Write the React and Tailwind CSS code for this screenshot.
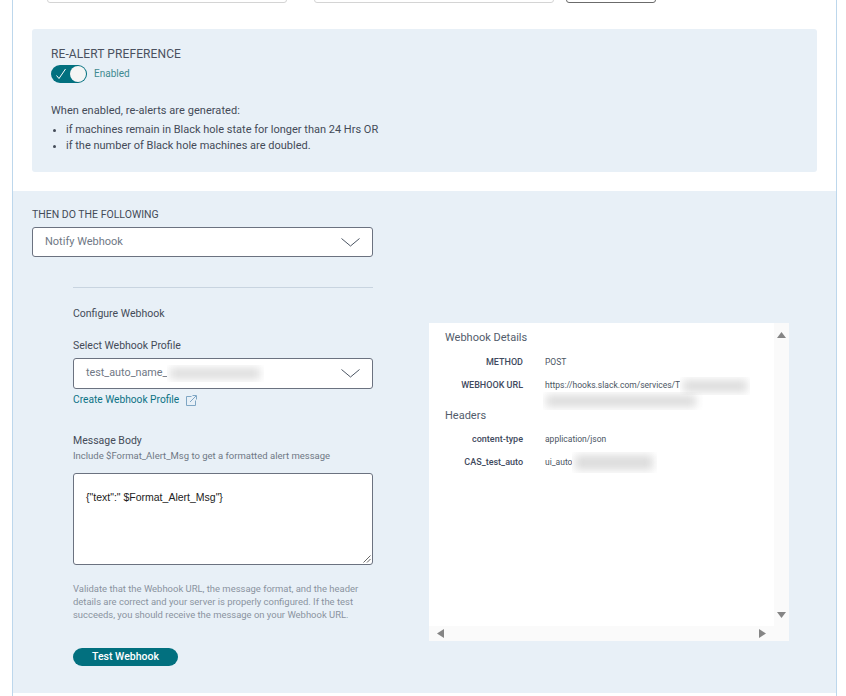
import React from "react";

const font = "font-['Roboto',sans-serif]";

function Chevron() {
  return (
    <svg width="19" height="9" viewBox="0 0 19 9" fill="none" className="shrink-0">
      <path d="M0.5 0.5 L9.5 8 L18.5 0.5" stroke="#4b5563" strokeWidth="1" />
    </svg>
  );
}

function Blur({ w, h, inner, ml = 0 }) {
  return (
    <span className="inline-block overflow-hidden bg-white align-middle" style={{ width: w, height: h, marginLeft: ml }}>
      <span className="block mt-[3px] ml-[3px] bg-[#dcdcdc] blur-[4px]" style={{ width: inner, height: h - 6 }} />
    </span>
  );
}

function Row({ label, children, className = "" }) {
  return (
    <div className={`flex text-[8.5px] leading-[13px] ${className}`}>
      <div className="w-[78px] shrink-0 text-right text-[9px] font-medium text-[#3f4a5e]">{label}</div>
      <div className="ml-[22px] text-[#4b5563] w-[210px]">{children}</div>
    </div>
  );
}

export default function App() {
  return (
    <div className={`${font} w-[846px] h-[696px] overflow-hidden bg-white text-[#3f4654]`}>
      <div className="ml-[12px] w-[825px] h-[696px] border-x border-[#bdd7ec]">
        {/* clipped top form row */}
        <div className="h-[3px] overflow-hidden flex items-end pl-[34px]">
          <div className="w-[240px] h-[30px] shrink-0 rounded-[3px] border border-[#d4d4d4] bg-white" />
          <div className="ml-[27px] w-[240px] h-[30px] shrink-0 rounded-[3px] border border-[#d4d4d4] bg-white" />
          <div className="ml-[12px] w-[90px] h-[30px] shrink-0 rounded-[3px] border border-[#6b6b6b] bg-white" />
        </div>

        {/* re-alert */}
        <div className="mt-[26px] ml-[19px] w-[785px] h-[143px] rounded-[3px] bg-[#e8f0f7] pl-[19px] pt-[18px]">
          <div className="text-[12px] leading-[15px] tracking-[0.1px] text-[#4a5160]">RE-ALERT PREFERENCE</div>
          <div className="mt-[3px] flex items-center">
            <div className="w-[36px] h-[18px] rounded-full bg-[#02707f] flex items-center justify-between pl-[4px] pr-[1px]">
              <svg width="12" height="12" viewBox="0 0 12 12" fill="none">
                <path d="M1.5 7.5 L4 10.5 L10.5 1" stroke="#fff" strokeWidth="1" />
              </svg>
              <div className="w-[16px] h-[16px] rounded-full bg-[#f5f5f5]" />
            </div>
            <span className="ml-[7px] text-[10px] leading-[12px] text-[#3f8a90]">Enabled</span>
          </div>
          <p className="mt-[21px] text-[11px] leading-[14px] tracking-[0.05px] text-[#444b58]">When enabled, re-alerts are generated:</p>
          <ul className="mt-[4px] text-[11px] leading-[16px] text-[#444b58]">
            <li className="flex items-center">
              <span className="ml-[2px] mr-[10px] w-[3px] h-[3px] rounded-full bg-[#444b58]" />
              if machines remain in Black hole state for longer than 24 Hrs OR
            </li>
            <li className="flex items-center">
              <span className="ml-[2px] mr-[10px] w-[3px] h-[3px] rounded-full bg-[#444b58]" />
              if the number of Black hole machines are doubled.
            </li>
          </ul>
        </div>

        {/* then do */}
        <div className="mt-[19px] h-[502px] bg-[#e8f0f7] pl-[19px] pt-[17px] flex">
          <div className="w-[341px] shrink-0">
            <div className="text-[10.5px] leading-[13px] text-[#444b58]">THEN DO THE FOLLOWING</div>
            <div className="mt-[6px] h-[30px] rounded-[3px] border border-[#6b7280] bg-white flex items-center justify-between pl-[12px] pr-[12px]">
              <span className="pt-[1px] text-[11px] text-[#6f7885]">Notify Webhook</span>
              <Chevron />
            </div>

            <div className="ml-[41px] mt-[30px] border-t border-[#c8d4e0] pt-[19px]">
              <div className="text-[10.5px] leading-[13px] text-[#444b58]">Configure Webhook</div>
              <div className="mt-[19px] text-[10.5px] leading-[13px] text-[#444b58]">Select Webhook Profile</div>
              <div className="mt-[6px] h-[31px] rounded-[3px] border border-[#6b7280] bg-white flex items-center justify-between pl-[12px] pr-[12px]">
                <span className="flex items-center text-[10.8px] text-[#6f7885]">
                  test_auto_name_
                  <Blur w={97} h={17} inner={90} />
                </span>
                <Chevron />
              </div>
              <div className="mt-[4px] flex items-center">
                <span className="text-[10.2px] leading-[14px] text-[#0b7285]">Create Webhook Profile</span>
                <svg width="11" height="11" viewBox="0 0 11 11" fill="none" className="ml-[7px]">
                  <path d="M5.5 1.5 H0.5 V10.5 H9.5 V5.5" stroke="#7fa6c4" strokeWidth="1" />
                  <path d="M4 7 L10 1 M6.5 0.5 H10.5 V4.5" stroke="#7fa6c4" strokeWidth="1" />
                </svg>
              </div>

              <div className="mt-[27px] text-[10.5px] leading-[13px] text-[#444b58]">Message Body</div>
              <div className="mt-[3px] text-[9.5px] leading-[12px] text-[#6f7885]">Include $Format_Alert_Msg to get a formatted alert message</div>
              <div className="mt-[11px] relative h-[92px] rounded-[3px] border border-[#6b7280] bg-white pl-[12px] pt-[10px]">
                <span className="font-['Liberation_Sans',sans-serif] text-[10.5px] leading-[14px] text-[#222]">{'{"text":" $Format_Alert_Msg"}'}</span>
                <svg width="8" height="8" viewBox="0 0 8 8" className="absolute right-[1px] bottom-[1px]" fill="none">
                  <path d="M0.5 7.5 L7.5 0.5 M4 7.5 L7.5 4" stroke="#666" strokeWidth="1" />
                </svg>
              </div>
              <p className="mt-[17px] text-[9.45px] leading-[13px] text-[#8a93a0]">
                Validate that the Webhook URL, the message format, and the header details are correct and your server is properly configured. If the test succeeds, you should receive the message on your Webhook URL.
              </p>
              <button className="mt-[27px] block w-[105px] h-[18px] rounded-full bg-[#02707f] text-[10.5px] font-medium leading-[18px] text-white">Test Webhook</button>
            </div>
          </div>

          {/* details */}
          <div className="ml-[56px] mt-[115px] w-[360px] h-[318px] bg-[#fafafa] flex flex-col">
            <div className="flex flex-1 min-h-0">
              <div className="flex-1 bg-white pl-[16px] pt-[8px]">
                <div className="text-[11px] leading-[14px] text-[#525c6b]">Webhook Details</div>
                <Row label="METHOD" className="mt-[11px]">POST</Row>
                <Row label="WEBHOOK URL" className="mt-[10px]">
                  <span className="flex items-center h-[13px] whitespace-nowrap leading-[13px]">
                    https://hooks.slack.com/services/T
                    <Blur w={70} h={18} inner={64} />
                  </span>
                  <Blur w={160} h={18} inner={150} ml={-2} />
                </Row>
                <div className="-mt-[1px] text-[11px] leading-[14px] text-[#525c6b]">Headers</div>
                <Row label="content-type" className="mt-[10px]">application/json</Row>
                <Row label="CAS_test_auto" className="mt-[10px]">
                  <span className="flex items-center h-[13px]">
                    ui_auto
                    <Blur w={85} h={21} inner={78} />
                  </span>
                </Row>
              </div>
              <div className="w-[15px] shrink-0 flex flex-col items-center justify-between pt-[9px] pb-[8px]">
                <svg width="9" height="6" viewBox="0 0 9 6"><path d="M4.5 0 L9 6 H0 Z" fill="#858585" /></svg>
                <svg width="9" height="6" viewBox="0 0 9 6"><path d="M0 0 H9 L4.5 6 Z" fill="#858585" /></svg>
              </div>
            </div>
            <div className="h-[15px] shrink-0 flex items-center justify-between pl-[8px] pr-[23px]">
              <svg width="7" height="9" viewBox="0 0 7 9"><path d="M7 0 V9 L0 4.5 Z" fill="#858585" /></svg>
              <svg width="7" height="9" viewBox="0 0 7 9"><path d="M0 0 L7 4.5 L0 9 Z" fill="#858585" /></svg>
            </div>
          </div>
        </div>
      </div>
    </div>
  );
}
